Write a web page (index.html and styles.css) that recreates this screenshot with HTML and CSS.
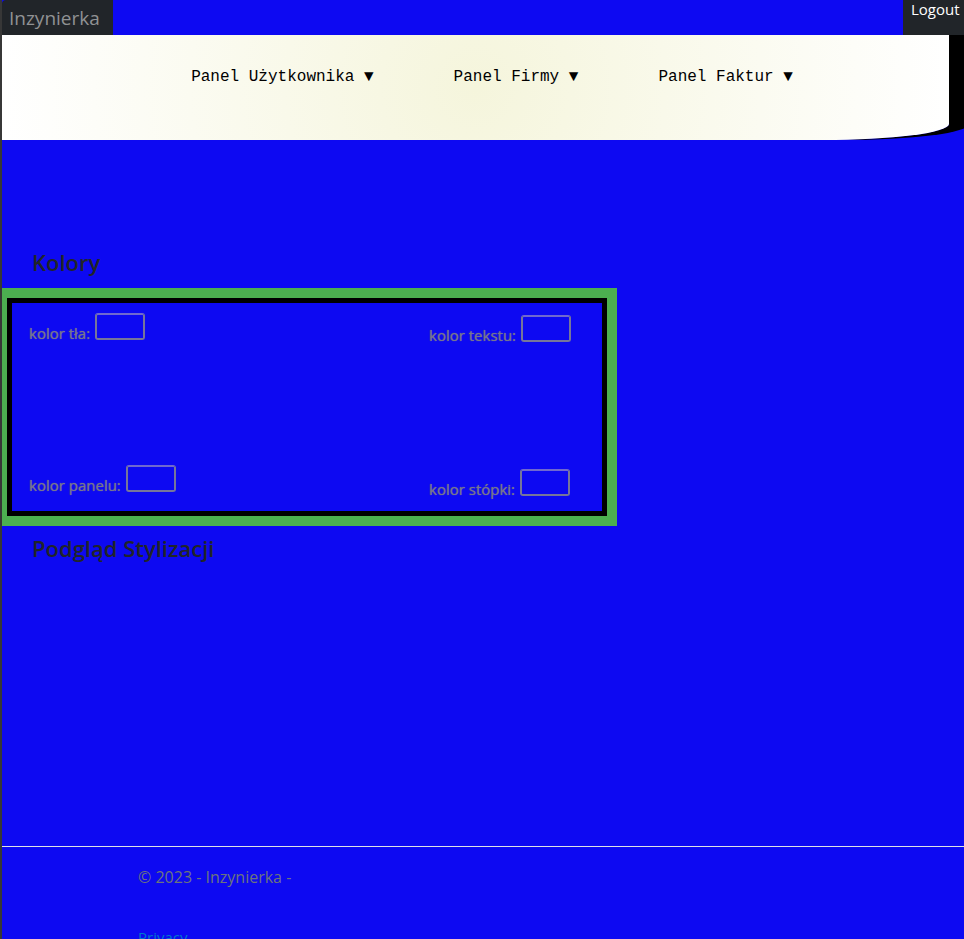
FILE: index.html
```html
<!DOCTYPE html>
<html lang="pl">
<head>
<meta charset="utf-8">
<title>Kolory - Inzynierka</title>
<link rel="stylesheet" href="styles.css">
</head>
<body>
<header>
  <div class="topbar">
    <a class="brand" href="#">Inzynierka</a>
    <button class="logout" type="button">Logout</button>
  </div>
  <nav class="menu">
    <a href="#">Panel Użytkownika ▼</a>
    <a href="#">Panel Firmy ▼</a>
    <a href="#">Panel Faktur ▼</a>
  </nav>
</header>
<main>
  <h2>Kolory</h2>
  <form class="frame">
    <div class="colors">
      <div class="column">
        <div class="field"><label for="bg">kolor tła:</label><input id="bg" type="text"></div>
        <div class="field"><label for="panel">kolor panelu:</label><input id="panel" type="text"></div>
      </div>
      <div class="column column-end">
        <div class="field"><label for="text">kolor tekstu:</label><input id="text" type="text"></div>
        <div class="field"><label for="foot">kolor stópki:</label><input id="foot" type="text"></div>
      </div>
    </div>
  </form>
  <h2>Podgląd Stylizacji</h2>
</main>
<footer>
  <p>© 2023 - Inzynierka -</p>
  <a href="#">Privacy</a>
</footer>
</body>
</html>
```
FILE: styles.css
```css
* { box-sizing: border-box; }

body {
  margin: 0;
  height: 100vh;
  overflow: hidden;
  display: flex;
  flex-direction: column;
  border-left: 2px solid #373737;
  background: #0d09f2;
  color: #212529;
  font: 15px/24px "Open Sans", "Noto Sans", sans-serif;
}

a { text-decoration: none; }

.topbar {
  display: flex;
  justify-content: space-between;
  height: 35px;
}

.brand {
  width: 111px;
  padding-left: 7px;
  border-top-left-radius: 4px;
  background: #212529;
  color: #909294;
  font-size: 19px;
  line-height: 36px;
}

.logout {
  display: flex;
  align-items: flex-start;
  width: 61px;
  padding: 0 0 0 8px;
  border: 0;
  background: #212529;
  color: #fff;
  font: 15px/18px "Open Sans", "Noto Sans", sans-serif;
}

.menu {
  display: flex;
  justify-content: center;
  gap: 80px;
  height: 105px;
  margin-right: 15px;
  padding: 30px 0 0 33px;
  border-bottom-right-radius: 126px 16px;
  background: radial-gradient(circle, beige, #fff);
  box-shadow: 20px 0 #000;
}

.menu a {
  color: #000;
  font-family: "Liberation Mono", monospace;
  font-size: 16px;
}

main {
  flex: none;
  min-height: 706px;
  padding-top: 108px;
}

h2 {
  margin: 0;
  padding: 0 30px 12px;
  font-size: 22px;
  font-weight: 600;
  line-height: 28px;
}

.frame {
  max-width: 615px;
  margin-bottom: 8px;
  border: 10px solid #4caf50;
  border-left-width: 5px;
}

.colors {
  display: grid;
  grid-template-columns: 400px 1fr;
  min-height: 218px;
  padding: 10px 0 0 17px;
  border: 5px solid #000;
}

.column {
  display: flex;
  flex-direction: column;
  gap: 125px;
}

.column-end {
  gap: 127px;
  padding-top: 2px;
}

.field {
  display: flex;
  align-items: flex-end;
  gap: 5px;
}

.field label {
  color: #76768f;
  font-size: 15px;
  line-height: 14px;
  text-shadow: 0 0 1px #76768f;
}

.field input {
  width: 50px;
  height: 27px;
  border: 2px solid #76769a;
  border-top-color: #7069cf;
  border-radius: 3px;
  background: transparent;
}

footer {
  flex: none;
  padding: 18px 136px;
  border-top: 1px solid #dee2e6;
  color: #6c757d;
}

footer p {
  margin: 0 0 36px;
  font-size: 16px;
}

footer a { color: #0077cc; }
```
